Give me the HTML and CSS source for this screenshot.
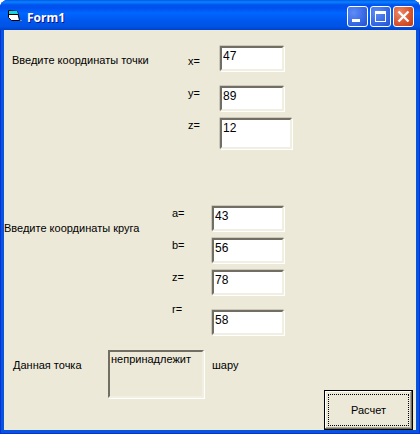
FILE: index.html

```html
<!DOCTYPE html>
<html lang="ru">
<head>
  <meta charset="UTF-8" />
  <title>Form1</title>
  <link rel="stylesheet" href="styles.css">
</head>
<body>

  <div class="window">
    <div class="titlebar">
      <svg class="app-icon" width="16" height="16" viewBox="0 0 16 16">
        <path d="M2.5 2.5l9 1 2 9h-8l-3-3z" fill="#fff" stroke="#000"/>
        <path d="M3 3h8l1 3H3z" fill="#19d4d8"/>
        <path d="M3 6.5h9" stroke="#000"/>
        <path d="M14 12h2v1h-2z" fill="#8a8a8a"/>
      </svg>
      <span class="title">Form1</span>
      <div class="controls">
        <div class="ctl ctl-blue">
          <svg width="19" height="19" viewBox="0 0 19 19"><rect x="4" y="12" width="8" height="3" fill="#fff"/></svg>
        </div>
        <div class="ctl ctl-blue">
          <svg width="19" height="19" viewBox="0 0 19 19"><path d="M4 4h11v11H4zM5 7v7h9V7z" fill="#fff" fill-rule="evenodd"/></svg>
        </div>
        <div class="ctl ctl-red">
          <svg width="19" height="19" viewBox="0 0 19 19"><path d="M4.5 4.5l10 10M14.5 4.5l-10 10" stroke="#fff" stroke-width="2.4"/></svg>
        </div>
      </div>
    </div>

    <div class="client">
      <div class="point">
        <div class="row row-x">
          <label class="caption">Введите координаты точки</label>
          <label class="var var-first">x=</label>
          <input class="field" value="47">
        </div>
        <div class="row row-y">
          <label class="caption"></label>
          <label class="var">y=</label>
          <input class="field" value="89">
        </div>
        <div class="row row-z">
          <label class="caption"></label>
          <label class="var">z=</label>
          <input class="field field-big" value="12">
        </div>
      </div>

      <div class="circle">
        <div class="row row-a">
          <label class="caption caption-low">Введите координаты круга</label>
          <label class="var">a=</label>
          <input class="field" value="43">
        </div>
        <div class="row row-b">
          <label class="caption"></label>
          <label class="var">b=</label>
          <input class="field" value="56">
        </div>
        <div class="row row-c">
          <label class="caption"></label>
          <label class="var">z=</label>
          <input class="field" value="78">
        </div>
        <div class="row row-r">
          <label class="caption"></label>
          <label class="var var-r">r=</label>
          <input class="field" value="58">
        </div>
      </div>

      <div class="result">
        <label class="result-label">Данная точка</label>
        <div class="result-box">непринадлежит</div>
        <label class="result-tail">шару</label>
        <button class="calc"><span class="calc-focus">Расчет</span></button>
      </div>
    </div>
  </div>

</body>
</html>
```

FILE: styles.css

```css
html, body {
  margin: 0;
  padding: 0;
  background: #fff;
}
body {
  font-family: "Liberation Sans", Arial, sans-serif;
  font-size: 11px;
  color: #000;
}
label {
  display: block;
  line-height: 13px;
}

.window {
  width: 420px;
  height: 434px;
  display: flex;
  flex-direction: column;
  box-sizing: border-box;
  background: #0855dd;
  border-radius: 8px 8px 0 0;
  box-shadow: inset 1px 0 0 #0831d9, inset -1px 0 0 #0831d9, inset 0 -1px 0 #0831d9;
  overflow: hidden;
}

/* title bar */
.titlebar {
  height: 30px;
  flex: none;
  box-sizing: border-box;
  display: flex;
  align-items: flex-start;
  padding: 6px 6px 0 6px;
  background: linear-gradient(to bottom, #0058e6 0, #0a83ff 2px, #0053ee 5px, #0050ee 8px, #0066ff 13px, #0058f0 20px, #0055e5 26px, #0043cf 30px);
}
.app-icon {
  margin-top: 2px;
}
.title {
  margin: 3px 0 0 5px;
  font-family: "Noto Sans", sans-serif;
  font-weight: bold;
  font-size: 12px;
  line-height: 18px;
  color: #fff;
  text-shadow: 1px 1px 0 #0f1089;
}
.controls {
  margin-left: auto;
  display: flex;
  gap: 2px;
}
.ctl {
  width: 19px;
  height: 19px;
  border: 1px solid #fff;
  border-radius: 3px;
  overflow: hidden;
}
.ctl svg {
  display: block;
}
.ctl-blue {
  background: radial-gradient(circle at 30% 30%, #5f8cf5 0, #3c6ee8 50%, #2450cf 100%);
}
.ctl-red {
  background: radial-gradient(circle at 30% 30%, #ec8a6a 0, #dc5a34 50%, #c03a12 100%);
}

/* form area */
.client {
  flex: 1;
  margin: 0 4px 4px;
  background: #ece9d8;
  overflow: hidden;
}
.row {
  display: flex;
  align-items: flex-start;
  height: 25px;
}
.caption {
  flex: none;
}
.var {
  flex: none;
  margin-top: 1px;
}
.field {
  flex: none;
  display: block;
  box-sizing: border-box;
  height: 25px;
  margin: 0;
  padding: 0 0 6px 1px;
  font-family: inherit;
  font-size: 12px;
  line-height: 14px;
  color: #000;
  background: #fff;
  border: 2px solid;
  border-color: #716f64 #f1efe2 #f1efe2 #716f64;
  box-shadow: -0.5px -0.5px 0 0 #aca899, 1px 1px 0 0 #fff;
  border-radius: 0;
  outline: none;
}

/* point */
.point {
  padding: 16px 0 0 8px;
}
.point .caption {
  width: 176px;
  margin-top: 8px;
}
.point .var {
  width: 32px;
}
.point .field {
  width: 64px;
}
.var-first {
  margin-top: 9px;
}
.row-y {
  margin-top: 15px;
}
.row-z {
  margin-top: 7px;
  height: 31px;
}
.point .field-big {
  width: 72px;
  height: 31px;
  padding-bottom: 12px;
}

/* circle */
.circle {
  padding-top: 57px;
}
.circle .caption {
  width: 168px;
  height: 1px;
}
.circle .caption-low {
  margin-top: 16px;
  height: 13px;
}
.circle .var {
  width: 40px;
}
.circle .field {
  width: 72px;
}
.row-b,
.row-c {
  margin-top: 7px;
}
.row-r {
  margin-top: 15px;
}
.var-r {
  margin-top: -7px;
}

/* result and button */
.result {
  display: flex;
  align-items: flex-start;
  margin-top: 15px;
  padding-left: 9px;
}
.result-label {
  width: 95px;
  flex: none;
  margin-top: 9px;
}
.result-box {
  flex: none;
  box-sizing: border-box;
  width: 96px;
  height: 48px;
  padding: 1px 0 0 1px;
  line-height: 13px;
  border: 2px solid;
  border-color: #716f64 #f1efe2 #f1efe2 #716f64;
  box-shadow: 1px 1px 0 0 #fff;
}
.result-tail {
  flex: none;
  margin: 9px 0 0 8px;
}
.calc {
  flex: none;
  box-sizing: border-box;
  width: 89px;
  height: 40px;
  margin: 40px 3px 0 auto;
  padding: 3px;
  font: inherit;
  color: #000;
  background: #ece9d8;
  border: 1px solid #000;
  border-radius: 0;
  box-shadow: inset -1px -1px 0 #716f64, inset 1px 1px 0 #fff, inset -2px -2px 0 #aca899;
}
.calc-focus {
  display: flex;
  align-items: center;
  justify-content: center;
  height: 100%;
  box-sizing: border-box;
  border: 1px dotted #000;
}
```
